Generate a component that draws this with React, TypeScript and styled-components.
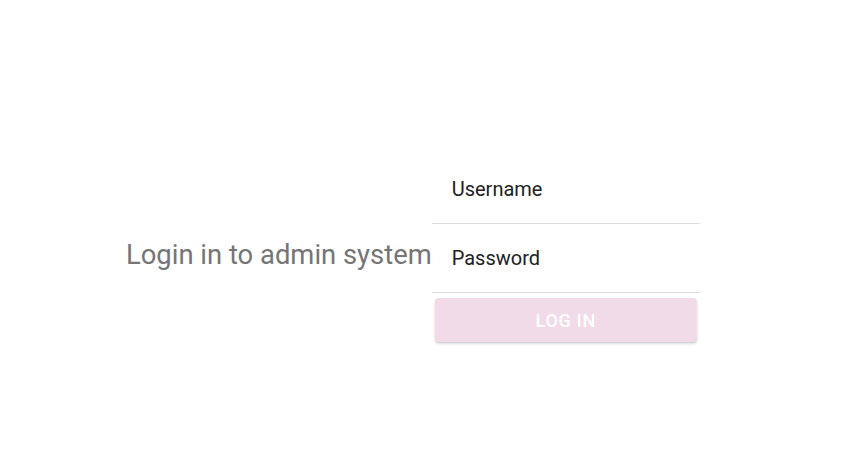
import styled, { createGlobalStyle } from "styled-components";

const GlobalStyle = createGlobalStyle`
  body {
    margin: 0;
    background: #ffffff;
    font-family: Roboto, "Liberation Sans", sans-serif;
  }
`;

const Page = styled.div`
  width: 844px;
  height: 458px;
  display: flex;
  align-items: flex-start;
  padding: 155px 0 0 126px;
  box-sizing: border-box;
`;

const Heading = styled.h1`
  margin: 84px 0 0;
  font-size: 27.4px;
  font-weight: 400;
  line-height: 32px;
  color: #757575;
  white-space: nowrap;
`;

const Form = styled.form`
  width: 268px;
  display: flex;
  flex-direction: column;
`;

const Field = styled.label`
  height: 69px;
  display: flex;
  align-items: flex-end;
  padding: 0 0 22px 20px;
  box-sizing: border-box;
  border-bottom: 1px solid #dcdcdc;
`;

const Input = styled.input`
  border: none;
  outline: none;
  background: transparent;
  padding: 0;
  width: 100%;
  font-family: Roboto, "Liberation Sans", sans-serif;
  font-size: 20px;
  line-height: 24px;
  color: #212121;

  &::placeholder {
    color: #212121;
    opacity: 1;
  }
`;

const Button = styled.button`
  margin: 5px 3px 0;
  height: 44px;
  border: none;
  border-radius: 4px;
  background: #f2dbe8;
  color: #ffffff;
  font-family: Roboto, "Liberation Sans", sans-serif;
  font-size: 18px;
  font-weight: 500;
  letter-spacing: 0.7px;
  text-transform: uppercase;
  box-shadow: 0 2px 3px rgba(0, 0, 0, 0.14), 0 1px 1px rgba(0, 0, 0, 0.06);
`;

export default function App() {
  return (
    <>
      <GlobalStyle />
      <Page>
        <Heading>Login in to admin system</Heading>
        <Form onSubmit={(e) => e.preventDefault()}>
          <Field>
            <Input placeholder="Username" />
          </Field>
          <Field>
            <Input type="password" placeholder="Password" />
          </Field>
          <Button type="submit" disabled>
            Log in
          </Button>
        </Form>
      </Page>
    </>
  );
}
